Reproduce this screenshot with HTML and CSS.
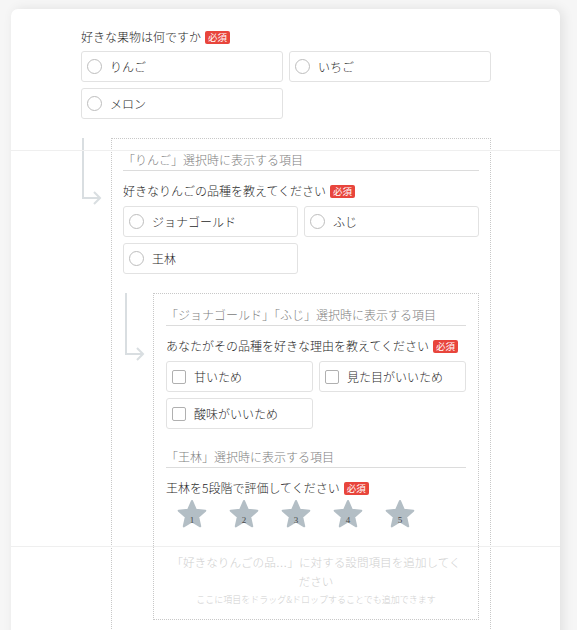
FILE: index.html
```html
<!DOCTYPE html>
<html lang="ja">
<head>
<meta charset="utf-8">
<link rel="stylesheet" href="styles.css">
</head>
<body>
<div class="card">
  <div class="hline hline-top"></div>
  <div class="hline hline-bottom"></div>
  <div class="content">
    <div class="question">好きな果物は何ですか<span class="badge">必須</span></div>
    <div class="options cols-q1">
      <div class="option"><span class="radio"></span>りんご</div>
      <div class="option"><span class="radio"></span>いちご</div>
      <div class="option"><span class="radio"></span>メロン</div>
    </div>

    <div class="cond">
      <div class="arrow">
        <svg width="30" height="70" viewBox="0 0 30 70"><path d="M2 0 V60 H19 M13 54 L19 60 L13 66" fill="none" stroke="#d9dee1" stroke-width="2"/></svg>
      </div>
      <div class="box box-outer">
        <div class="sec-head">「りんご」選択時に表示する項目</div>
        <div class="question q-in">好きなりんごの品種を教えてください<span class="badge">必須</span></div>
        <div class="options">
          <div class="option"><span class="radio"></span>ジョナゴールド</div>
          <div class="option"><span class="radio"></span>ふじ</div>
          <div class="option"><span class="radio"></span>王林</div>
        </div>

        <div class="cond">
          <div class="arrow">
            <svg width="30" height="70" viewBox="0 0 30 70"><path d="M3 0 V61 H20 M14 55 L20 61 L14 67" fill="none" stroke="#d9dee1" stroke-width="2"/></svg>
          </div>
          <div class="box box-inner">
            <div class="sec-head">「ジョナゴールド」「ふじ」選択時に表示する項目</div>
            <div class="question q-in">あなたがその品種を好きな理由を教えてください<span class="badge">必須</span></div>
            <div class="options">
              <div class="option"><span class="check"></span>甘いため</div>
              <div class="option"><span class="check"></span>見た目がいいため</div>
              <div class="option"><span class="check"></span>酸味がいいため</div>
            </div>

            <div class="sec-head sec-gap">「王林」選択時に表示する項目</div>
            <div class="question q-in">王林を5段階で評価してください<span class="badge">必須</span></div>
            <div class="stars">
              <div class="star"><svg width="30" height="30" viewBox="0 0 30 30"><polygon points="15,2 18.82,10.74 28.31,11.67 21.18,18.01 23.23,27.33 15,22.5 6.77,27.33 8.82,18.01 1.69,11.67 11.18,10.74" class="star-shape"/><text x="15" y="24" class="star-num">1</text></svg></div>
              <div class="star"><svg width="30" height="30" viewBox="0 0 30 30"><polygon points="15,2 18.82,10.74 28.31,11.67 21.18,18.01 23.23,27.33 15,22.5 6.77,27.33 8.82,18.01 1.69,11.67 11.18,10.74" class="star-shape"/><text x="15" y="24" class="star-num">2</text></svg></div>
              <div class="star"><svg width="30" height="30" viewBox="0 0 30 30"><polygon points="15,2 18.82,10.74 28.31,11.67 21.18,18.01 23.23,27.33 15,22.5 6.77,27.33 8.82,18.01 1.69,11.67 11.18,10.74" class="star-shape"/><text x="15" y="24" class="star-num">3</text></svg></div>
              <div class="star"><svg width="30" height="30" viewBox="0 0 30 30"><polygon points="15,2 18.82,10.74 28.31,11.67 21.18,18.01 23.23,27.33 15,22.5 6.77,27.33 8.82,18.01 1.69,11.67 11.18,10.74" class="star-shape"/><text x="15" y="24" class="star-num">4</text></svg></div>
              <div class="star"><svg width="30" height="30" viewBox="0 0 30 30"><polygon points="15,2 18.82,10.74 28.31,11.67 21.18,18.01 23.23,27.33 15,22.5 6.77,27.33 8.82,18.01 1.69,11.67 11.18,10.74" class="star-shape"/><text x="15" y="24" class="star-num">5</text></svg></div>
            </div>

            <div class="drop">
              <div class="drop-main">「好きなりんごの品<span class="ell">…</span>」に対する設問項目を追加してください</div>
              <div class="drop-sub">ここに項目をドラッグ&amp;ドロップすることでも追加できます</div>
            </div>
          </div>
        </div>
      </div>
    </div>
  </div>
</div>
</body>
</html>
```

FILE: styles.css
```css
* { box-sizing: border-box; }
html, body { margin: 0; padding: 0; }
body {
  background: #f6f6f6;
  font-family: "Noto Sans CJK JP", "Noto Sans", sans-serif;
  font-weight: 300;
  color: #1f1f1f;
  font-size: 12px;
  overflow: hidden;
}
.card {
  position: relative;
  margin: 9px 17px 0 11px;
  background: #fff;
  border-radius: 7px 7px 0 0;
  box-shadow: 3px 0 12px rgba(0,0,0,0.09);
  min-height: 700px;
  padding: 18px 0 0 70px;
}
.hline {
  position: absolute;
  left: 0;
  right: 0;
  height: 1px;
  background: #efefef;
}
.hline-top { top: 141px; }
.hline-bottom { top: 537px; }
.content { width: 410px; }
.question {
  font-size: 12px;
  line-height: 20px;
  height: 20px;
  display: flex;
  align-items: center;
  white-space: nowrap;
}
.badge {
  display: inline-block;
  background: #e8453c;
  color: #fff;
  font-size: 9.5px;
  font-weight: 400;
  line-height: 13px;
  height: 13px;
  padding: 0 3px;
  border-radius: 2px;
  margin-left: 4px;
}
.options {
  display: grid;
  grid-template-columns: 1fr 1fr;
  gap: 6px;
  margin-top: 5px;
}
.cols-q1 { margin-top: 4px; }
.option {
  height: 31px;
  border: 1px solid #e2e2e2;
  border-radius: 3px;
  display: flex;
  align-items: center;
  padding-left: 5px;
  font-size: 12px;
  background: #fff;
}
.radio {
  width: 15px;
  height: 15px;
  border: 1px solid #bdbdbd;
  border-radius: 50%;
  margin-right: 8px;
  flex: none;
}
.check {
  width: 14px;
  height: 14px;
  border: 1px solid #b0b0b0;
  border-radius: 2px;
  margin-right: 8px;
  flex: none;
}
.cond {
  display: flex;
  margin-top: 19px;
}
.arrow {
  width: 30px;
  flex: none;
}
.arrow svg { display: block; }
.box {
  flex: 1;
  border: 1px dotted #c8c8c8;
}
.box-outer {
  padding: 12px 11px 40px;
}
.box-inner {
  padding: 12px 12px 13px;
}
.sec-head {
  color: #808080;
  font-size: 12px;
  line-height: 18px;
  padding-bottom: 1px;
  border-bottom: 1px solid #dcdcdc;
  white-space: nowrap;
}
.sec-gap { margin-top: 19px; }
.q-in { margin-top: 10px; }
.stars {
  display: flex;
  margin-top: 1px;
}
.star {
  width: 52px;
  display: flex;
  justify-content: center;
}
.star svg { display: block; }
.star-shape {
  fill: #b3bec5;
  stroke: #b3bec5;
  stroke-width: 2;
  stroke-linejoin: round;
}
.star-num {
  font-family: "Liberation Serif", serif;
  font-size: 9px;
  fill: #4a4a4a;
  text-anchor: middle;
}
.drop {
  margin-top: 24px;
  text-align: center;
}
.drop-main {
  color: #cfcfcf;
  font-size: 11.6px;
  line-height: 19px;
}
.ell { font-family: "Liberation Sans", sans-serif; }
.drop-sub {
  color: #cfcfcf;
  font-size: 9px;
  line-height: 12px;
  margin-top: 3px;
}
```
